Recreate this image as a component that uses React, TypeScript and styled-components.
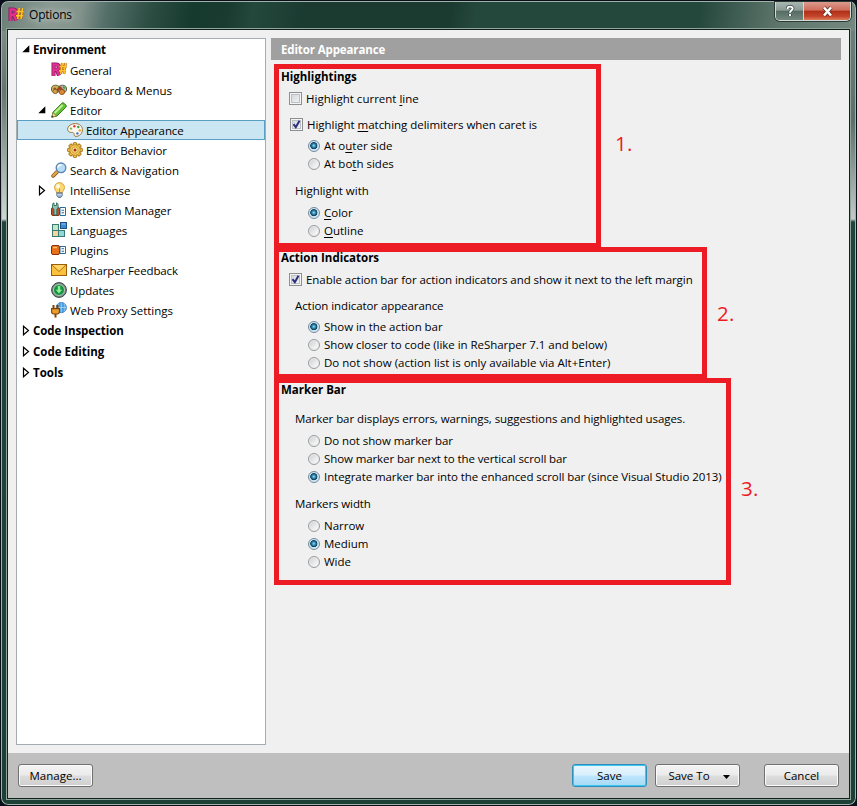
import React from 'react';
import styled, { createGlobalStyle, css } from 'styled-components';

const Global = createGlobalStyle`
  * { box-sizing: border-box; }
  html, body { margin: 0; padding: 0; }
  body { width: 857px; height: 806px; overflow: hidden; background: #0b0f1c;
    font-family: "Open Sans", "Noto Sans", sans-serif; font-size: 11.5px; color: #000; }
`;

const Window = styled.div`
  width: 857px; height: 806px; display: flex; flex-direction: column;
  border: 1px solid #0a0e18; border-radius: 8px;
  padding: 0 6px 6px;
  box-shadow: inset 0 0 0 1px #9fb3aa;
  background:
    linear-gradient(180deg, #7d8b85 0, #66756e 60px, #a9b2ad 140px, #cfd5d2 188px, #20443a 191px, #1d4036 100%) 0 30px / 7px 776px no-repeat,
    linear-gradient(180deg, #6c8078 0, #5b7068 90px, #c3c9c6 188px, #20443a 191px, #1d4036 100%) 848px 30px / 7px 776px no-repeat,
    linear-gradient(100deg, #6b7f77 0, #8b9b94 50px, #82938c 80px, #55706a 105px, #2b4d42 150px, #173a2f 190px, #193b30 225px, #24483c 250px, #1b3b31 300px, #1b3b31 445px, #25483c 470px, #25483c 690px, #5f766d 770px, #768a82 855px) 0 0 / 100% 30px no-repeat,
    #1d4036;
`;
const TitleBar = styled.header`
  height: 27px; display: flex; align-items: flex-start; padding: 6px 0 0 1px; flex: none;
`;
const TitleText = styled.span`
  font-size: 12px; line-height: 17px; margin: -1px 0 0 5px; letter-spacing: -.2px; color: #000; padding-right: 12px;
  text-shadow: 0 0 6px rgba(255,255,255,.6), 0 0 10px rgba(255,255,255,.5);
`;
const Caption = styled.div`
  display: flex; margin: -5px -1px 0 auto; height: 19px; width: 76px;
  border: 1px solid #d3dbd7; border-top: 0; border-radius: 0 0 5px 5px; overflow: hidden;
  box-shadow: 0 0 0 1px #2b3a35;
`;
const CaptionButton = styled.button<{ $close?: boolean }>`
  border: 0; padding: 0; margin: 0; flex: ${p => (p.$close ? '1' : '0 0 28px')};
  display: flex; align-items: center; justify-content: center;
  border-right: ${p => (p.$close ? 0 : '1px solid #d3dbd7')};
  background: ${p => p.$close
    ? 'linear-gradient(#dc9a8e 0, #cf6c5a 46%, #b02e17 50%, #c4452c 80%, #dd7c5c 100%)'
    : 'linear-gradient(#a9b7b1 0, #8a9b94 46%, #566b63 50%, #72877e 100%)'};
`;
const Client = styled.div`
  flex: 1; display: flex; flex-direction: column; min-height: 0;
  border: 1px solid #10211c; background: #f0f0f0; outline: 1px solid #8fa59b;
  margin: 1px 0 0;
`;
const Body = styled.main`
  flex: 1; display: flex; padding: 8px; gap: 5px; min-height: 0;
`;
const Tree = styled.nav`
  width: 250px; border: 1px solid #a5acb2; background: #fff; display: flex; flex-direction: column;
`;
const TreeRow = styled.div<{ $level: number; $selected?: boolean }>`
  display: flex; align-items: center; flex: none; white-space: nowrap;
  height: ${p => (p.$level === 0 ? 21 : 20)}px;
  padding-left: ${p => [3, 19, 35][p.$level]}px;
  font-weight: ${p => (p.$level === 0 ? 700 : 400)};
  ${p => p.$selected && css`background: #cbe6f3; box-shadow: inset 0 0 0 1px #5a9fc4;`}
`;
const ArrowSlot = styled.span`
  width: 13px; height: 16px; flex: none; display: flex; align-items: center; justify-content: flex-start; padding-left: 1px;
`;
const IconSlot = styled.span`width: 16px; height: 16px; flex: none; margin: 0 3px 0 2px; display: flex;`;
const Label = styled.span<{ $ls?: number; $tree?: boolean }>`
  line-height: 18px; white-space: nowrap; letter-spacing: ${p => p.$ls ?? 0}px;
  padding-top: ${p => (p.$tree ? 1 : 0)}px;
  u { text-underline-offset: 2px; text-decoration-thickness: 1px; text-decoration-skip-ink: none; }
`;
const Pane = styled.section`flex: 1; display: flex; flex-direction: column; min-width: 0;`;
const PaneHeader = styled.h1`
  margin: 0 0 4px; height: 22px; background: #a0a0a0; color: #fff; font-size: 11.5px; font-weight: 700;
  padding-left: 10px; display: flex; align-items: center; flex: none; letter-spacing: -.12px;
`;
const Marked = styled.div<{ $overlap?: boolean }>`
  display: flex; margin: ${p => (p.$overlap ? '-1px' : '0')} 0 0 3px;
`;
const Frame = styled.div<{ $w: number; $h: number }>`
  width: ${p => p.$w}px; height: ${p => p.$h}px; border: 5px solid #ed1c24; flex: none;
`;
const Note = styled.span<{ $top: number; $left: number }>`
  margin: ${p => p.$top}px 0 0 ${p => p.$left}px; color: #ed1c24; font-size: 20.5px; line-height: 24px; letter-spacing: .4px;
`;
const Heading = styled.h2<{ $h: number }>`
  margin: 0; padding-left: 2px; height: ${p => p.$h}px; line-height: ${p => p.$h}px; font-size: 11.5px; font-weight: 700;
  white-space: nowrap;
`;
const Row = styled.label<{ $gap?: number; $kind: 'check' | 'radio' | 'text'; $shift?: number }>`
  display: flex; align-items: center; height: 18px; margin-top: ${p => p.$gap ?? 0}px;
  padding-left: ${p => ({ check: 10, radio: 29, text: 16 })[p.$kind] + (p.$shift ?? 0)}px;
`;
const CheckBox = styled.span`
  width: 13px; height: 13px; border: 1px solid #8e8f8f; flex: none; margin: -1px 4px 0 0; display: flex;
  box-shadow: inset 0 0 0 1px #f4f4f4, inset 0 0 0 2px #bcc1c6;
  background: linear-gradient(135deg, #cfd3d8, #f6f6f6);
`;
const RadioDot = styled.span<{ $on?: boolean }>`
  width: 12px; height: 12px; border-radius: 50%; border: 1px solid ${p => (p.$on ? '#6f8ba0' : '#9a9c9d')};
  flex: none; margin: -1px 4px 0 0;
  background: ${p => p.$on
    ? 'radial-gradient(circle at 48% 46%, #a6e2f4 0, #3d9cc4 18%, #14506f 38%, #16405a 44%, #c3dfee 52%, #dbe9f2 70%)'
    : 'linear-gradient(135deg, #c9cdd1, #f5f5f5 75%)'};
  box-shadow: inset 0 0 0 1px ${p => (p.$on ? '#d4e6f1' : '#ececec')};
`;
const Footer = styled.footer`
  height: 45px; background: #bfbfbf; display: flex; align-items: center; padding: 0 10px 0 10px; flex: none;
`;
const Button = styled.button<{ $primary?: boolean; $push?: boolean; $w?: number; $ml?: number }>`
  height: 23px; width: ${p => p.$w ?? 75}px; margin: 0 0 0 ${p => (p.$push ? 'auto' : `${p.$ml ?? 0}px`)};
  padding: 0; display: flex; align-items: center; justify-content: center; gap: 13px;
  font: inherit; color: #000; border-radius: 3px;
  border: 1px solid ${p => (p.$primary ? '#2f8fb8' : '#707070')};
  background: ${p => p.$primary
    ? 'linear-gradient(#eaf6fd 0, #d9f0fc 48%, #bee6fd 52%, #a7d9f5 100%)'
    : 'linear-gradient(#f3f3f3 0, #ebebeb 48%, #dddddd 52%, #cfcfcf 100%)'};
  box-shadow: inset 0 0 0 1px ${p => (p.$primary ? '#3cc7f3' : '#fbfbfb')};
`;
const DropMark = styled.span`display: flex; margin: 2px -3px 0 0;`;

const ReSharper = () => (
  <svg width="16" height="16" viewBox="0 0 16 16">
    <path d="M2.500 14V2.500H5a2.500 2.500 0 0 1 .8 5L8 13.500M3 8h3" fill="none" stroke="#86175e" strokeWidth="4" />
    <path d="M2.500 14V2.500H5a2.500 2.500 0 0 1 .8 5L8 13.500M3 8h3" fill="none" stroke="#e0318f" strokeWidth="2.400" />
    <path d="M11.300 1 9.700 12M14.600 1 13 12M8.600 4.500h7M8 8.700h7" fill="none" stroke="#b0600a" strokeWidth="2.600" />
    <path d="M11.300 1 9.700 12M14.600 1 13 12M8.600 4.500h7M8 8.700h7" fill="none" stroke="#ffc629" strokeWidth="1.500" />
  </svg>
);
const Keyboard = () => (
  <svg width="16" height="16" viewBox="0 0 16 16">
    <ellipse cx="4.600" cy="7" rx="4.200" ry="3.800" fill="#c5b55a" stroke="#6c6232" />
    <ellipse cx="11.400" cy="7" rx="4.200" ry="3.800" fill="#b5b5a8" stroke="#5c6448" />
    <path d="m3 6 3 3 3-3.500 4 4.500" fill="none" stroke="#a3401f" strokeWidth="2.400" />
    <circle cx="11" cy="10" r="2.600" fill="#d98a35" stroke="#8a4a16" strokeWidth=".8" />
    <circle cx="4.200" cy="9.500" r="2.200" fill="#d7a24d" stroke="#7d5a26" strokeWidth=".8" />
    <path d="M12.200 4.600 14 6.400" stroke="#45a436" strokeWidth="1.800" />
  </svg>
);
const Pencil = () => (
  <svg width="16" height="16" viewBox="0 0 16 16">
    <path d="M.8 15.200 2 10.200 10.800 1.300a1.600 1.600 0 0 1 2.300 0l1.700 1.700a1.600 1.600 0 0 1 0 2.300L6 14z" fill="#62c234" stroke="#2f7d16" />
    <path d="M3.600 11 11.600 3" stroke="#c5f09a" strokeWidth="1.800" />
    <path d="m.8 15.200 1.200-4.600L5.400 14z" fill="#f2d9a0" stroke="#8b7434" strokeWidth=".7" />
    <path d="m.6 15.400.6-2 1.400 1.400z" fill="#333" />
  </svg>
);
const Palette = () => (
  <svg width="16" height="16" viewBox="0 0 16 16">
    <path d="M8.500 1.600c4 0 6.900 2.600 6.900 6.200 0 3.800-3 6.600-6.600 6.600-1.700 0-1.500-1.700-1.900-2.900-.6-1.600-2.300-.8-3.700-1.200C1.400 9.800.6 8.700.6 7.300c0-3.500 4-5.700 7.900-5.700z" fill="#fbf7f0" stroke="#97703f" />
    <circle cx="4" cy="6.600" r="1.200" fill="#7bbb4a" /><circle cx="7.400" cy="4.300" r="1.200" fill="#e23b2a" />
    <circle cx="11.300" cy="5" r="1.200" fill="#3fa046" /><circle cx="12.800" cy="8.400" r="1.200" fill="#e8a423" />
    <circle cx="10.400" cy="11.400" r="1.200" fill="#3f6fc4" />
  </svg>
);
const Gear = () => (
  <svg width="16" height="16" viewBox="0 0 16 16">
    {[0, 45, 90, 135].map(a => (
      <rect key={a} x="6.200" y=".5" width="3.600" height="15" rx="1.300" fill="#eeb93c" stroke="#94670f" strokeWidth=".9" transform={`rotate(${a} 8 8)`} />
    ))}
    <circle cx="8" cy="8" r="5.200" fill="#f6cc58" stroke="#b07d19" strokeWidth=".6" />
    <circle cx="8" cy="8" r="3.200" fill="#f9e08e" stroke="#bd8a20" strokeWidth=".7" />
    <circle cx="8" cy="8" r="1.500" fill="#a8301a" />
  </svg>
);
const Search = () => (
  <svg width="16" height="16" viewBox="0 0 16 16">
    <path d="m2.200 13.800 4.600-4.600" stroke="#8a5a1c" strokeWidth="3.800" strokeLinecap="round" />
    <path d="m2.200 13.600 4.200-4.200" stroke="#e4a648" strokeWidth="2.200" strokeLinecap="round" />
    <circle cx="10" cy="5.800" r="4.800" fill="#b9dcf5" stroke="#5b87b3" strokeWidth="1.400" />
    <path d="M7 5.500C7.300 3.700 8.800 2.900 10.500 3" fill="none" stroke="#fff" strokeWidth="1.500" />
  </svg>
);
const Bulb = () => (
  <svg width="16" height="16" viewBox="0 0 16 16">
    <path d="M8.500.6a5 5 0 0 1 5 4.900c0 2.200-1.700 3.200-2.300 5.500H5.800C5.200 8.700 3.500 7.700 3.500 5.500a5 5 0 0 1 5-4.900z" fill="#fbd775" stroke="#d59d3c" strokeWidth=".9" />
    <ellipse cx="7" cy="4.300" rx="2" ry="2.300" fill="#fffbe0" />
    <path d="M8.500 10V6.500" stroke="#e0892c" />
    <path d="M5.800 10.800h5.400v3l-1.500 1.700H7.300l-1.500-1.700z" fill="#8eabc6" stroke="#4c6680" strokeWidth=".8" />
    <path d="M6 12.800h5" stroke="#e2edf5" strokeWidth=".8" />
  </svg>
);
const ExtensionPlug = () => (
  <svg width="16" height="16" viewBox="0 0 16 16">
    <rect x=".5" y="5.500" width="8" height="8" rx="1.500" fill="#c0502c" stroke="#8a2f0a" />
    <path d="M1.500 6V3.200C1.500 1.800 2.200 1 3 .8v2.700h2.500V.8c1 .3 1.600 1.100 1.600 2.400V6L5.800 7.200V13H3V7.200z" fill="#8cc4b3" stroke="#2f6a5c" strokeWidth=".9" />
    <path d="M9 5.500h5.500v8H9z" fill="#fff" stroke="#2b6a9d" />
    <path d="M10.500 8.300h2.500M10.500 10.800h2.500" stroke="#24659c" strokeWidth="1.100" />
  </svg>
);
const Plug = () => (
  <svg width="16" height="16" viewBox="0 0 16 16">
    <rect x=".5" y="3.500" width="8" height="9" rx="1.500" fill="#e8701b" stroke="#8a2f0a" />
    <path d="M2 5.500h4" stroke="#ffc070" strokeWidth="1.400" />
    <path d="M9 4.500h5.500v7H9z" fill="#fff" stroke="#2b6a9d" />
    <path d="M10.500 6.800h2.500M10.500 9.300h2.500" stroke="#24659c" strokeWidth="1.100" />
  </svg>
);
const Languages = () => (
  <svg width="16" height="16" viewBox="0 0 16 16">
    <rect x="1.500" y="2.500" width="6" height="6" fill="#bfe8c8" stroke="#3b7a72" />
    <rect x="1.500" y="8.500" width="6" height="6" fill="#f3d69b" stroke="#3b7a72" />
    <rect x="7.500" y="8.500" width="6" height="6" fill="#8fd8d8" stroke="#3b7a72" />
    <rect x="9.500" y=".5" width="6" height="6" fill="#3c8bcb" stroke="#1d4f86" />
    <path d="M10.500 2h4" stroke="#92c9f0" />
  </svg>
);
const Mail = () => (
  <svg width="16" height="16" viewBox="0 0 16 16">
    <rect x=".5" y="2.500" width="15" height="11" fill="#fbc13a" stroke="#9a5f0c" />
    <path d="m1 3 7 6.500L15 3" fill="#ffd566" stroke="#b5700f" />
  </svg>
);
const Updates = () => (
  <svg width="16" height="16" viewBox="0 0 16 16">
    <circle cx="8" cy="8" r="7.400" fill="#7e8b84" stroke="#39473f" /><circle cx="8" cy="8" r="5.500" fill="#159447" stroke="#c6d8cc" strokeWidth=".8" />
    <path d="M6.800 4h2.400v3.800h2L8 11.600 4.800 7.800h2z" fill="#8df08a" />
  </svg>
);
const Proxy = () => (
  <svg width="16" height="16" viewBox="0 0 16 16">
    <circle cx="10.300" cy="5.600" r="5.100" fill="#4a9ee2" stroke="#2a6fb5" strokeWidth=".8" />
    <path d="M5.500 5.500h9.600M10.300.8v9.600M7.600 1.500c-1.400 3-1.400 5.500 0 8M13 1.500c1.400 3 1.400 5.500 0 8" fill="none" stroke="#b5dcf8" strokeWidth=".7" />
    <path d="M2.500 3V7M6.500 3V7M4.500 11v4.500" stroke="#7c4508" strokeWidth="2" />
    <path d="M.6 6.600h7.800v3.200a2.200 2.200 0 0 1-2.200 2.200H2.800A2.200 2.200 0 0 1 .6 9.800z" fill="#ec9c2e" stroke="#7c4508" strokeWidth="1.100" />
  </svg>
);
const Arrow = ({ open }: { open: boolean }) => (
  <svg width="10" height="11" viewBox="0 0 10 11">
    {open ? <path d="M8.300 1.300v7H1.300z" fill="#000" /> : <path d="M2.500 1.200v8.600l5-4.300z" fill="#fff" stroke="#000" strokeWidth="1.200" />}
  </svg>
);

type Node = { text: string; level: number; icon?: React.ReactNode; open?: boolean; selected?: boolean; ls?: number };
const nodes: Node[] = [
  { text: 'Environment', level: 0, open: true, ls: -0.15 },
  { text: 'General', level: 1, icon: <ReSharper />, ls: -0.1 },
  { text: 'Keyboard & Menus', level: 1, icon: <Keyboard /> },
  { text: 'Editor', level: 1, icon: <Pencil />, open: true },
  { text: 'Editor Appearance', level: 2, icon: <Palette />, selected: true, ls: -0.1 },
  { text: 'Editor Behavior', level: 2, icon: <Gear />, ls: -0.12 },
  { text: 'Search & Navigation', level: 1, icon: <Search />, ls: 0.05 },
  { text: 'IntelliSense', level: 1, icon: <Bulb />, open: false, ls: -0.08 },
  { text: 'Extension Manager', level: 1, icon: <ExtensionPlug />, ls: -0.1 },
  { text: 'Languages', level: 1, icon: <Languages /> },
  { text: 'Plugins', level: 1, icon: <Plug /> },
  { text: 'ReSharper Feedback', level: 1, icon: <Mail />, ls: -0.12 },
  { text: 'Updates', level: 1, icon: <Updates />, ls: -0.1 },
  { text: 'Web Proxy Settings', level: 1, icon: <Proxy /> },
  { text: 'Code Inspection', level: 0, open: false, ls: -0.07 },
  { text: 'Code Editing', level: 0, open: false },
  { text: 'Tools', level: 0, open: false },
];

type OptProps = { children: React.ReactNode; on?: boolean; gap?: number; ls?: number; shift?: number };
const Check = ({ children, on, gap, ls, shift }: OptProps) => (
  <Row $kind="check" $gap={gap} $shift={shift}>
    <CheckBox>{on && <svg width="11" height="11" viewBox="0 0 11 11"><path d="m2.500 5.200 2.300 3L8.500 1.800" fill="none" stroke="#2b2f7c" strokeWidth="2" /></svg>}</CheckBox>
    <Label $ls={ls}>{children}</Label>
  </Row>
);
const Radio = ({ children, on, gap, ls }: OptProps) => (
  <Row $kind="radio" $gap={gap}><RadioDot $on={on} /><Label $ls={ls}>{children}</Label></Row>
);
const Text = ({ children, gap, ls }: OptProps) => (
  <Row as="div" $kind="text" $gap={gap}><Label $ls={ls}>{children}</Label></Row>
);

export default function App() {
  return (
    <>
      <Global />
      <Window>
        <TitleBar>
          <ReSharper />
          <TitleText>Options</TitleText>
          <Caption>
            <CaptionButton aria-label="Help">
              <svg width="10" height="12" viewBox="0 0 10 12"><path d="M2.500 4c0-3.200 5.200-3 5.200-.4C7.700 5.300 5 5.300 5 7.800M5 9v2" fill="none" stroke="#3b4a44" strokeWidth="3.400" /><path d="M2.500 4c0-3.200 5.200-3 5.200-.4C7.700 5.300 5 5.300 5 7.800M5 9v2" fill="none" stroke="#fff" strokeWidth="1.900" /></svg>
            </CaptionButton>
            <CaptionButton $close aria-label="Close">
              <svg width="13" height="11" viewBox="0 0 13 11"><path d="m3 1.500 7 8m0-8-7 8" stroke="#5b2a22" strokeWidth="4" /><path d="m3 1.500 7 8m0-8-7 8" stroke="#fff" strokeWidth="2.600" /></svg>
            </CaptionButton>
          </Caption>
        </TitleBar>
        <Client>
          <Body>
            <Tree>
              {nodes.map(n => (
                <TreeRow key={n.text} $level={n.level} $selected={n.selected}>
                  <ArrowSlot>{n.open !== undefined && <Arrow open={n.open} />}</ArrowSlot>
                  {n.icon && <IconSlot>{n.icon}</IconSlot>}
                  <Label $tree $ls={n.ls}>{n.text}</Label>
                </TreeRow>
              ))}
            </Tree>
            <Pane>
              <PaneHeader>Editor Appearance</PaneHeader>
              <Marked>
                <Frame $w={327} $h={184}>
                  <Heading $h={16}>Highlightings</Heading>
                  <Check gap={5}>Highlight current <u>l</u>ine</Check>
                  <Check gap={8} shift={1} ls={-0.03} on>Highlight <u>m</u>atching delimiters when caret is</Check>
                  <Radio gap={3} on>At o<u>u</u>ter side</Radio>
                  <Radio>At bo<u>t</u>h sides</Radio>
                  <Text gap={9}>Highlight with</Text>
                  <Radio gap={4} on><u>C</u>olor</Radio>
                  <Radio><u>O</u>utline</Radio>
                </Frame>
                <Note $top={67} $left={14}>1.</Note>
              </Marked>
              <Marked $overlap>
                <Frame $w={433} $h={132}>
                  <Heading $h={12}>Action Indicators</Heading>
                  <Check gap={7} ls={-0.055} on>Enable action bar for action indicators and show it next to the left margin</Check>
                  <Text gap={8} ls={-0.08}>Action indicator appearance</Text>
                  <Radio gap={3} ls={-0.05} on>Show in the action bar</Radio>
                  <Radio ls={-0.04}>Show closer to code (like in ReSharper 7.1 and below)</Radio>
                  <Radio>Do not show (action list is only available via Alt+Enter)</Radio>
                </Frame>
                <Note $top={54} $left={10}>2.</Note>
              </Marked>
              <Marked $overlap>
                <Frame $w={457} $h={207}>
                  <Heading $h={14}>Marker Bar</Heading>
                  <Text gap={13} ls={-0.07}>Marker bar displays errors, warnings, suggestions and highlighted usages.</Text>
                  <Radio gap={4} ls={-0.08}>Do not show marker bar</Radio>
                  <Radio ls={-0.1}>Show marker bar next to the vertical scroll bar</Radio>
                  <Radio ls={-0.075} on>Integrate marker bar into the enhanced scroll bar (since Visual Studio 2013)</Radio>
                  <Text gap={9} ls={-0.1}>Markers width</Text>
                  <Radio gap={4}>Narrow</Radio>
                  <Radio on>Medium</Radio>
                  <Radio>Wide</Radio>
                </Frame>
                <Note $top={98} $left={10}>3.</Note>
              </Marked>
            </Pane>
          </Body>
          <Footer>
            <Button>Manage...</Button>
            <Button $primary $push>Save</Button>
            <Button $w={85} $ml={8}>Save To
              <DropMark><svg width="7" height="4" viewBox="0 0 7 4"><path d="M0 0h7L3.500 4z" fill="#000" /></svg></DropMark>
            </Button>
            <Button $ml={24}>Cancel</Button>
          </Footer>
        </Client>
      </Window>
    </>
  );
}
